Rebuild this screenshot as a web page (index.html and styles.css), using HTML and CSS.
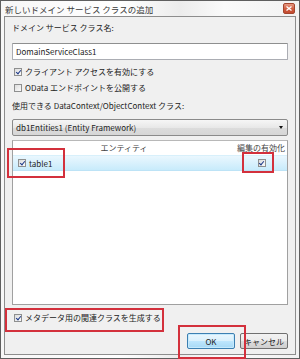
FILE: index.html
```html
<!DOCTYPE html>
<html lang="ja">
<head>
  <meta charset="UTF-8">
  <title>新しいドメイン サービス クラスの追加</title>
  <link rel="stylesheet" href="styles.css">
</head>
<body>
  <div class="window">
    <div class="titlebar">
      <span class="title">新しいドメイン サービス クラスの追加</span>
      <span class="close"><svg width="6" height="5" viewBox="0 0 6 5"><path d="M0.5 0.5 L5.5 4.5 M5.5 0.5 L0.5 4.5" stroke="#fff" stroke-width="1.3"/></svg></span>
    </div>

    <div class="client">
      <div class="label first">ドメイン サービス クラス名:</div>
      <div class="textbox">DomainServiceClass1</div>

      <div class="check gap-6"><span class="box on"></span>クライアント アクセスを有効にする</div>
      <div class="check gap-4"><span class="box"></span>OData エンドポイントを公開する</div>

      <div class="label gap-6">使用できる DataContext/ObjectContext クラス:</div>
      <div class="combo">
        <span>db1Entities1 (Entity Framework)</span>
        <span class="arrow"></span>
      </div>

      <div class="grid">
        <div class="grid-head">
          <span class="col-name">エンティティ</span>
          <span class="col-edit">編集の有効化</span>
        </div>
        <div class="grid-row">
          <span class="col-name left"><span class="box on"></span>table1</span>
          <span class="col-edit"><span class="box on"></span></span>
        </div>
      </div>

      <div class="check gap-7"><span class="box on"></span>メタデータ用の関連クラスを生成する</div>

      <div class="buttons">
        <button class="btn default">OK</button>
        <button class="btn">キャンセル</button>
      </div>
    </div>

    <div class="mark mark-table"></div>
    <div class="mark mark-edit"></div>
    <div class="mark mark-meta"></div>
    <div class="mark mark-ok"></div>
  </div>
</body>
</html>
```

FILE: styles.css
```css
html, body {
  margin: 0;
  padding: 0;
}
body {
  width: 300px;
  height: 359px;
  overflow: hidden;
  font-family: "Noto Sans CJK JP", "Noto Sans", sans-serif;
  font-size: 8px;
  color: #222;
  background: #fff;
}
.window {
  position: relative;
  box-sizing: border-box;
  width: 300px;
  height: 359px;
  border: 1px solid #5f5f5f;
  background: linear-gradient(90deg, #f7f7f7 0%, #ffffff 40%, #ececec 60%, #fafafa 75%, #f2f2f2 100%);
  padding: 0 3px 4px 3px;
}
.titlebar {
  height: 15px;
  display: flex;
  align-items: center;
  justify-content: space-between;
}
.title {
  font-size: 8.5px;
  color: #3a3a3a;
  padding-left: 1px;
}
.close {
  width: 12px;
  height: 11px;
  margin-right: 1px;
  border-radius: 2px;
  border: 1px solid #a4452e;
  box-sizing: border-box;
  background: linear-gradient(#e79a84, #cf5a3e 55%, #c24a30);
  display: flex;
  align-items: center;
  justify-content: center;
}
.client {
  box-sizing: border-box;
  height: 339px;
  border: 1px solid #8d8d8d;
  background: #f0f0f0;
  padding: 0 7px;
  display: flex;
  flex-direction: column;
}
.label {
  line-height: 12px;
  height: 12px;
  white-space: nowrap;
}
.first { margin-top: 5px; }
.gap-4 { margin-top: 4px; }
.gap-6 { margin-top: 6px; }
.gap-7 { margin-top: 7px; }
.textbox {
  margin-top: 9px;
  height: 17px;
  box-sizing: border-box;
  border: 1px solid #abadb3;
  border-top-color: #8e8f8f;
  border-radius: 1px;
  background: #fff;
  padding-left: 3px;
  line-height: 15px;
}
.check {
  display: flex;
  align-items: center;
  height: 12px;
  line-height: 12px;
  padding-left: 2px;
  white-space: nowrap;
}
.box {
  display: inline-block;
  width: 8px;
  height: 8px;
  box-sizing: border-box;
  border: 1px solid #8e8f8f;
  background: linear-gradient(135deg, #dcdcdc, #fbfbfb);
  margin-right: 3px;
  flex: none;
  position: relative;
}
.box.on::after {
  content: "";
  position: absolute;
  left: 1.5px;
  top: -0.5px;
  width: 2px;
  height: 4px;
  border: solid #1e3a8a;
  border-width: 0 1.5px 1.5px 0;
  transform: rotate(40deg);
}
.combo {
  margin-top: 7px;
  height: 17px;
  box-sizing: border-box;
  border: 1px solid #8a8a8a;
  border-radius: 2px;
  background: linear-gradient(#f6f6f6, #e8e8e8 50%, #dcdcdc 51%, #d6d6d6);
  display: flex;
  align-items: center;
  justify-content: space-between;
  padding: 0 4px 0 3px;
}
.arrow {
  width: 0;
  height: 0;
  border-left: 2.5px solid transparent;
  border-right: 2.5px solid transparent;
  border-top: 3px solid #111;
}
.grid {
  margin-top: 4px;
  height: 165px;
  box-sizing: border-box;
  border: 1px solid #a0a0a0;
  border-top-color: #b8b8b8;
  background: #fff;
}
.grid-head {
  display: flex;
  height: 14px;
  line-height: 14px;
  color: #444;
}
.grid-row {
  display: flex;
  align-items: center;
  height: 14px;
  background: linear-gradient(#eaf7fe, #c8ebfb);
  border-top: 1px solid #d8f0fb;
  border-bottom: 1px solid #bde3f6;
}
.col-name {
  width: 222px;
  text-align: center;
}
.col-name.left {
  text-align: left;
  display: flex;
  align-items: center;
  padding-left: 5px;
  box-sizing: border-box;
}
.col-edit {
  flex: 1;
  display: flex;
  justify-content: center;
  white-space: nowrap;
}
.grid-row .col-edit {
  padding-left: 4px;
}
.buttons {
  margin-top: 9px;
  display: flex;
  justify-content: flex-end;
  gap: 5px;
}
.btn {
  width: 48px;
  height: 16px;
  box-sizing: border-box;
  font-family: inherit;
  font-size: 8px;
  color: #222;
  padding: 0;
  border: 1px solid #707070;
  border-radius: 2px;
  background: linear-gradient(#f2f2f2, #ebebeb 50%, #dddddd 51%, #cfcfcf);
}
.btn.default {
  border-color: #3c7fb1;
  background: linear-gradient(#eaf6fd, #d9f0fc 50%, #bee6fd 51%, #a7d9f5);
  box-shadow: inset 0 0 0 1px #c6eafd;
}
.mark {
  position: absolute;
  border: 2px solid #d3303c;
  box-sizing: border-box;
}
.mark-table { left: 6px; top: 147px; width: 58px; height: 30px; }
.mark-edit { left: 241px; top: 151px; width: 32px; height: 21px; }
.mark-meta { left: 4px; top: 307px; width: 159px; height: 24px; }
.mark-ok { left: 177px; top: 324px; width: 68px; height: 34px; }
```
